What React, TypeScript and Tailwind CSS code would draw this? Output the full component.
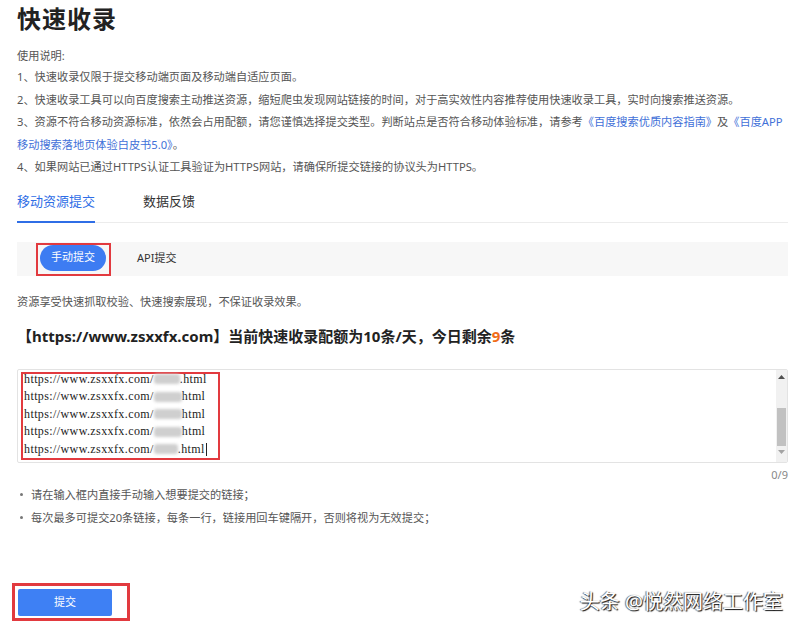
import React from 'react';

const font = { fontFamily: '"Noto Sans", "Noto Sans CJK SC", sans-serif' };

const Blur: React.FC<{ w: number }> = ({ w }) => (
    <span
        className="inline-block h-[10px] rounded-[3px] bg-[#cfcfcf] align-middle blur-[1.5px]"
        style={{ width: w }}
    />
);

const UrlLine: React.FC<{ dot?: boolean; caret?: boolean; w?: number }> = ({ dot, caret, w = 24 }) => (
    <div className="flex items-center whitespace-nowrap">
        <span>https://www.zsxxfx.com/</span>
        <Blur w={w} />
        <span>{dot ? '.html' : ' html'}</span>
        {caret && <span className="ml-[1px] inline-block h-[13px] w-px bg-[#222]" />}
    </div>
);

export default function App() {
    return (
        <div className="min-h-[625px] w-[800px] bg-white pl-[17px] pr-[12px] text-[11.2px] text-[#555]" style={font}>
            <h1 className="pt-[3px] text-[24px] font-bold leading-[31px] tracking-[1px] text-[#222]">快速收录</h1>

            <div className="mt-[12px]">
                <p className="leading-[20px]">使用说明:</p>
                <div className="leading-[22.5px]">
                    <p>1、快速收录仅限于提交移动端页面及移动端自适应页面。</p>
                    <p>2、快速收录工具可以向百度搜索主动推送资源，缩短爬虫发现网站链接的时间，对于高实效性内容推荐使用快速收录工具，实时向搜索推送资源。</p>
                    <p className="whitespace-nowrap">
                        3、资源不符合移动资源标准，依然会占用配额，请您谨慎选择提交类型。判断站点是否符合移动体验标准，请参考
                        <span className="text-[#4170d8]">《百度搜索优质内容指南》</span>及
                        <span className="text-[#4170d8]">《百度APP</span>
                    </p>
                    <p>
                        <span className="text-[#4170d8]">移动搜索落地页体验白皮书5.0》</span>。
                    </p>
                    <p>4、如果网站已通过HTTPS认证工具验证为HTTPS网站，请确保所提交链接的协议头为HTTPS。</p>
                </div>
            </div>

            <div className="mt-[8px] flex border-b border-[#ececec] text-[13px]">
                <div className="-mb-px border-b-2 border-[#2f6ee6] pb-[6px] leading-[28px] text-[#2f6ee6]">移动资源提交</div>
                <div className="ml-[48px] pb-[6px] leading-[28px] text-[#333]">数据反馈</div>
            </div>

            <div className="mt-[19px] flex h-[34px] items-start bg-[#f7f7f7]">
                <div className="mt-[1px] ml-[19px] border-2 border-[#e23a3f] pl-[2px] pr-[3px] pb-[3px]">
                    <div className="flex h-[26px] w-[66px] items-center justify-center rounded-full bg-[#3d7cf2] text-[11px] text-white">手动提交</div>
                </div>
                <div className="ml-[26px] self-center text-[11px] text-[#333]">API提交</div>
            </div>

            <p className="mt-[16px] leading-[20px]">资源享受快速抓取校验、快速搜索展现，不保证收录效果。</p>

            <h2 className="mt-[12px] text-[15px] font-bold leading-[24px] text-[#222]">
                【https://www.zsxxfx.com】当前快速收录配额为10条/天，今日剩余<span className="text-[#f06d1a]">9</span>条
            </h2>

            <div className="mt-[21px] flex h-[94px] rounded-[2px] border border-[#e3e3e3]">
                <div className="flex-1 pl-[3px] pt-[2px]">
                    <div
                        className="w-[199px] border-2 border-[#e23a3f] pl-px text-[12px] tracking-[0.4px] text-[#222]"
                        style={{ fontFamily: '"Liberation Serif", serif' }}
                    >
                        <div className="-mt-[3px] leading-[17.5px]">
                            <UrlLine dot w={26} />
                            <UrlLine w={28} />
                            <UrlLine w={28} />
                            <UrlLine w={28} />
                            <UrlLine dot caret w={24} />
                        </div>
                    </div>
                </div>
                <div className="flex w-[11px] flex-col items-center bg-[#f1f1f1]">
                    <svg width="7" height="4" viewBox="0 0 7 4" className="mt-[5px]">
                        <path d="M0 4 L3.5 0 L7 4 Z" fill="#505050" />
                    </svg>
                    <div className="mt-[29px] h-[38px] w-[9px] bg-[#c1c1c1]" />
                    <svg width="7" height="4" viewBox="0 0 7 4" className="mt-[4px]">
                        <path d="M0 0 L7 0 L3.5 4 Z" fill="#a3a3a3" />
                    </svg>
                </div>
            </div>

            <div className="mt-[4px] text-right text-[11px] leading-[16px] text-[#888]">0/9</div>

            <ul className="leading-[23px]">
                <li className="flex items-center">
                    <span className="ml-[3px] mr-[8px] h-[3px] w-[3px] rounded-full bg-[#777]" />
                    请在输入框内直接手动输入想要提交的链接；
                </li>
                <li className="flex items-center">
                    <span className="ml-[3px] mr-[8px] h-[3px] w-[3px] rounded-full bg-[#777]" />
                    每次最多可提交20条链接，每条一行，链接用回车键隔开，否则将视为无效提交；
                </li>
            </ul>

            <div className="mt-[54px] flex items-center justify-between">
                <div className="-ml-[5px] border-[3px] border-[#e23a3f] pt-[3px] pl-[3px] pr-[15px] pb-[2px]">
                    <div className="flex h-[27px] w-[94px] items-center justify-center rounded-[2px] bg-[#3e80f4] text-[11px] text-white">提交</div>
                </div>
                <div className="mr-[5px] text-[20px] leading-[24px] text-white [text-shadow:1px_1px_1px_rgba(0,0,0,0.95),-1px_0_1px_rgba(0,0,0,0.6)]">
                    头条 @悦然网络工作室
                </div>
            </div>
        </div>
    );
}
